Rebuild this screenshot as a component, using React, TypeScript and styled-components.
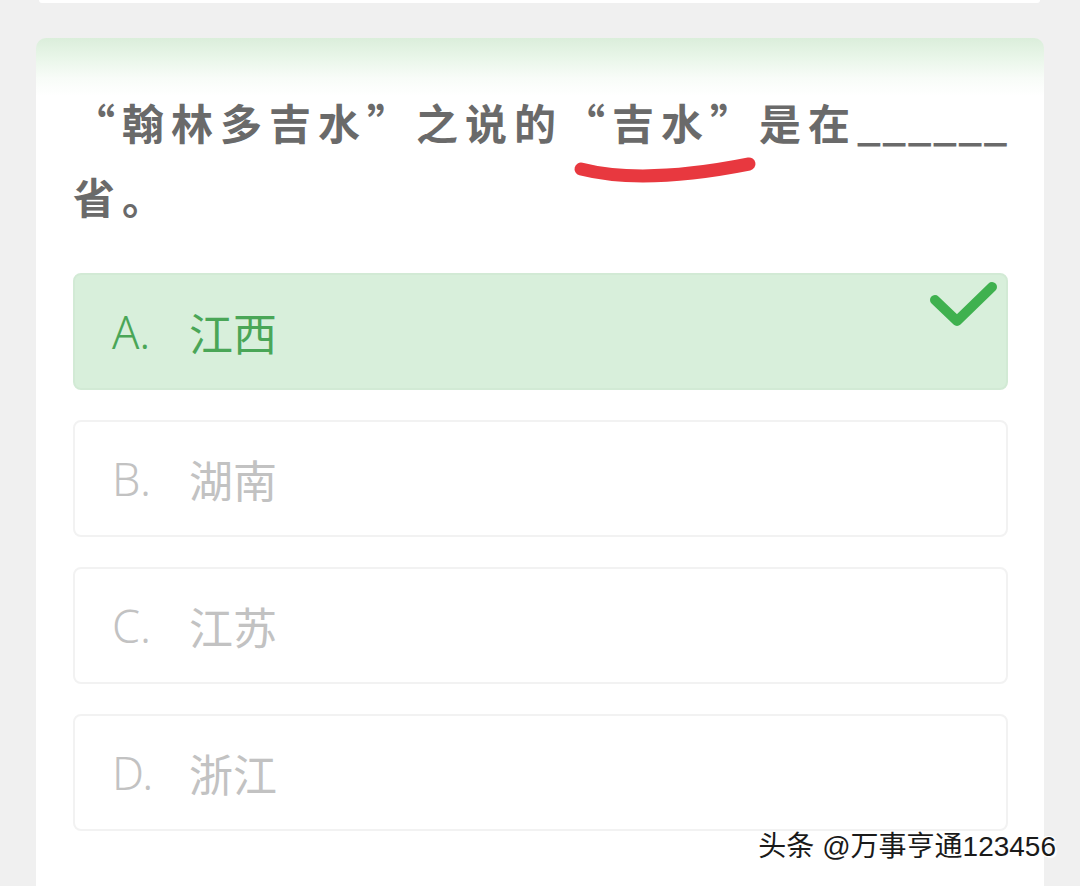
import React from "react";
import styled, { createGlobalStyle } from "styled-components";

const Global = createGlobalStyle`
  html, body { margin: 0; padding: 0; background: #f0f0f0; }
  body { font-family: "Noto Sans CJK SC", "Noto Sans", sans-serif; }
`;

const Page = styled.div`
  position: relative;
  width: 1080px;
  height: 886px;
  overflow: hidden;
  background: #f0f0f0;
`;

const TopCard = styled.div`
  margin: 0 40px 0 39px;
  height: 3px;
  background: #fff;
  border-radius: 0 0 6px 6px;
`;

const Card = styled.div`
  position: relative;
  margin: 35px 36px 0 36px;
  height: 900px;
  border-radius: 10px;
  background: linear-gradient(180deg, #dbeedb 0px, #e9f6e9 20px, #f8fcf8 40px, #ffffff 58px, #ffffff 100%);
  padding: 47px 28px 0 37px;
  box-sizing: border-box;
`;

const Question = styled.div`
  position: relative;
  font-size: 42px;
  line-height: 74px;
  font-weight: 700;
  color: #6a6a6a;
  letter-spacing: 7px;
`;

const Blank = styled.span`
  letter-spacing: 1.5px;
  white-space: nowrap;
`;

const Mark = styled.svg`
  position: absolute;
  left: 500px;
  top: 70px;
  pointer-events: none;
`;

const Options = styled.div`
  display: flex;
  flex-direction: column;
  gap: 30px;
  margin-top: 40px;
  margin-right: 8px;
`;

const Option = styled.div<{ $correct?: boolean }>`
  position: relative;
  height: 117px;
  box-sizing: border-box;
  display: flex;
  align-items: center;
  padding-left: 37px;
  border-radius: 8px;
  border: 2px solid ${(p) => (p.$correct ? "#d2ead5" : "#f2f2f2")};
  background: ${(p) => (p.$correct ? "#d8efdb" : "#ffffff")};
  color: ${(p) => (p.$correct ? "#4aa657" : "#c2c2c2")};
  font-size: 44px;
  font-weight: 400;
`;

const Letter = styled.span`
  width: 77px;
  font-family: "Noto Sans", "Noto Sans CJK SC", sans-serif;
  font-weight: 300;
  font-size: 45px;
`;

const Check = styled.svg`
  position: absolute;
  right: 8px;
  top: 4px;
`;

const Watermark = styled.div`
  position: absolute;
  right: 24px;
  bottom: 22px;
  font-size: 28px;
  color: #1a1a1a;
  font-family: "Liberation Sans", "Noto Sans CJK SC", sans-serif;
  text-shadow: 1px 1px 0 #fff, -1px -1px 0 #fff, 1px -1px 0 #fff, -1px 1px 0 #fff, 2px 2px 1px rgba(255,255,255,0.9);
`;

const options = [
  { k: "A.", v: "江西", correct: true },
  { k: "B.", v: "湖南" },
  { k: "C.", v: "江苏" },
  { k: "D.", v: "浙江" },
];

export default function App() {
  return (
    <Page lang="zh-CN">
      <Global />
      <TopCard />
      <Card>
        <Question>
          “翰林多吉水”之说的“吉水”是在<Blank>______</Blank>省。
          <Mark width="200" height="40" viewBox="0 0 200 40">
            <path d="M8 14 Q 70 30 176 9" stroke="#e8383f" strokeWidth="13" strokeLinecap="round" fill="none" />
          </Mark>
        </Question>
        <Options>
          {options.map((o) => (
            <Option key={o.k} $correct={o.correct}>
              <Letter>{o.k}</Letter>
              {o.v}
              {o.correct && (
                <Check width="72" height="52" viewBox="0 0 72 52">
                  <path d="M9 21 L31 42 L66 8" stroke="#3fb14f" strokeWidth="10" strokeLinecap="round" strokeLinejoin="round" fill="none" />
                </Check>
              )}
            </Option>
          ))}
        </Options>
      </Card>
      <Watermark>头条 @万事亨通123456</Watermark>
    </Page>
  );
}
